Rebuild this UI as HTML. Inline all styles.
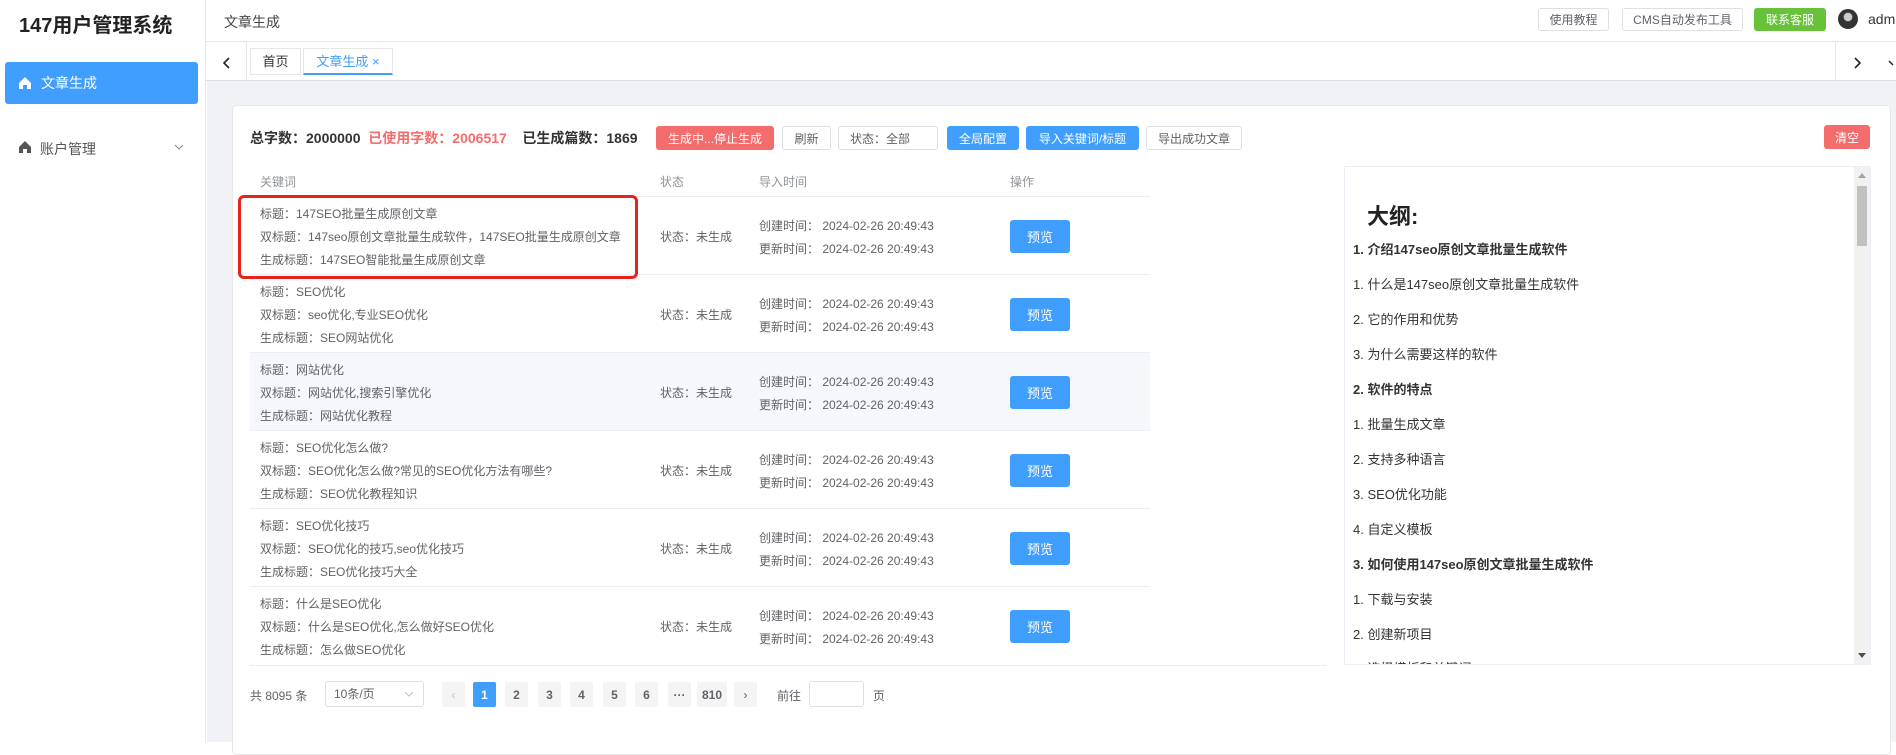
<!DOCTYPE html>
<html><head><meta charset="utf-8"><style>
*{margin:0;padding:0;box-sizing:border-box}
body{width:1896px;height:742px;overflow:hidden;background:#fff;font-family:"Liberation Sans","Noto Sans CJK SC",sans-serif;color:#606266;position:relative}
.a{position:absolute;white-space:nowrap}
.btn{position:absolute;border:1px solid #dcdfe6;border-radius:3px;font-size:12px;display:flex;align-items:center;justify-content:center;background:#fff;color:#606266}
.row{position:absolute;left:250px;width:900px;height:78px;border-bottom:1px solid #ebeef5;font-size:12px}
.row .t{position:absolute;left:10px}
.pv{position:absolute;left:760px;top:23px;width:60px;height:33px;background:#409eff;color:#fff;border-radius:3px;font-size:13px;display:flex;align-items:center;justify-content:center}
.ol{position:absolute;left:8px;font-size:13px;color:#333}
.pg{position:absolute;top:682px;width:23px;height:25px;background:#f4f4f5;border-radius:2px;font-size:12px;color:#606266;display:flex;align-items:center;justify-content:center;font-weight:bold}
</style></head><body>
<!-- sidebar -->
<div class="a" style="left:0;top:0;width:206px;height:742px;border-right:1px solid #e6e6e6"></div>
<div class="a" style="left:19px;top:9px;font-size:20px;font-weight:bold;color:#222">147用户管理系统</div>
<div class="a" style="left:5px;top:62px;width:193px;height:42px;background:#409eff;border-radius:3px;color:#fff;font-size:14px;line-height:42px;padding-left:36px">文章生成</div>
<svg class="a" style="left:18px;top:76px" width="14" height="14" viewBox="0 0 14 14"><path d="M7 1L1 7V13H5V9H9V13H13V7Z" fill="#fff"/></svg>
<svg class="a" style="left:18px;top:140px" width="14" height="14" viewBox="0 0 14 14"><path d="M7 1L1 7V13H5V9H9V13H13V7Z" fill="#555"/></svg>
<div class="a" style="left:40px;top:139px;font-size:14px;color:#555">账户管理</div>
<svg class="a" style="left:174px;top:144px" width="10" height="6"><path d="M1 1L5 5L9 1" stroke="#888" fill="none"/></svg>
<!-- header -->
<div class="a" style="left:206px;top:41px;width:1690px;height:1px;background:#e6e6e6"></div>
<div class="a" style="left:224px;top:12px;font-size:14px;color:#444">文章生成</div>
<div class="btn" style="left:1538px;top:8px;width:71px;height:23px">使用教程</div>
<div class="btn" style="left:1622px;top:8px;width:121px;height:23px">CMS自动发布工具</div>
<div class="btn" style="left:1754px;top:8px;width:72px;height:23px;background:#67c23a;border-color:#67c23a;color:#fff">联系客服</div>
<div class="a" style="left:1838px;top:9px;width:20px;height:20px;border-radius:50%;background:radial-gradient(circle at 50% 40%,#ccc 0 25%,#333 30%)"></div>
<div class="a" style="left:1868px;top:11px;font-size:14px;color:#333">adm</div>
<!-- tabs -->
<div class="a" style="left:206px;top:80px;width:1690px;height:1px;background:#dcdfe6"></div>
<svg class="a" style="left:223px;top:57px" width="8" height="12"><path d="M6 1L1 6L6 11" stroke="#222" stroke-width="1.6" fill="none"/></svg>
<div class="a" style="left:246px;top:42px;width:1px;height:38px;background:#e6e6e6"></div>
<div class="a" style="left:250px;top:48px;width:51px;height:27px;border:1px solid #e6e6e6;font-size:13px;color:#333;text-align:center;line-height:25px">首页</div>
<div class="a" style="left:303px;top:48px;width:90px;height:27px;border:1px solid #e6e6e6;border-bottom:2px solid #409eff;font-size:13px;color:#409eff;text-align:center;line-height:25px">文章生成 ×</div>
<div class="a" style="left:1835px;top:42px;width:1px;height:38px;background:#e6e6e6"></div>
<svg class="a" style="left:1853px;top:57px" width="8" height="12"><path d="M2 1L7 6L2 11" stroke="#222" stroke-width="1.6" fill="none"/></svg>
<svg class="a" style="left:1888px;top:60px" width="8" height="6"><path d="M1 1L5 5" stroke="#222" stroke-width="1.4" fill="none"/></svg>
<!-- content -->
<div class="a" style="left:207px;top:81px;width:1689px;height:661px;background:#f0f2f5"></div>
<div class="a" style="left:232px;top:105px;width:1659px;height:650px;background:#fff;border:1px solid #e8e8e8;border-radius:4px"></div>
<div class="a" style="left:250px;top:128px;font-size:14px;font-weight:bold;color:#333">总字数：2000000 <span style="color:#f56c6c">&nbsp;已使用字数：2006517</span> &nbsp;&nbsp;&nbsp;已生成篇数：1869</div>
<div class="btn" style="left:656px;top:126px;width:118px;height:24px;background:#f56c6c;border-color:#f56c6c;color:#fff">生成中...停止生成</div>
<div class="btn" style="left:782px;top:126px;width:49px;height:24px">刷新</div>
<div class="btn" style="left:838px;top:126px;width:100px;height:24px;justify-content:flex-start;padding-left:11px">状态：全部</div>
<div class="btn" style="left:947px;top:126px;width:72px;height:24px;background:#409eff;border-color:#409eff;color:#fff">全局配置</div>
<div class="btn" style="left:1026px;top:126px;width:113px;height:24px;background:#409eff;border-color:#409eff;color:#fff">导入关键词/标题</div>
<div class="btn" style="left:1146px;top:126px;width:96px;height:24px">导出成功文章</div>
<div class="btn" style="left:1824px;top:125px;width:46px;height:24px;background:#f56c6c;border-color:#f56c6c;color:#fff">清空</div>
<!-- table header -->
<div class="a" style="left:250px;top:196px;width:900px;height:1px;background:#ebeef5"></div>
<div class="a" style="left:260px;top:173px;font-size:12px;color:#909399">关键词</div>
<div class="a" style="left:660px;top:173px;font-size:12px;color:#909399">状态</div>
<div class="a" style="left:759px;top:173px;font-size:12px;color:#909399">导入时间</div>
<div class="a" style="left:1010px;top:173px;font-size:12px;color:#909399">操作</div>

<div class="row" style="top:197px"><div class="t" style="top:8px">标题：147SEO批量生成原创文章</div><div class="t" style="top:31px">双标题：147seo原创文章批量生成软件，147SEO批量生成原创文章</div><div class="t" style="top:54px">生成标题：147SEO智能批量生成原创文章</div><div class="a" style="left:410px;top:31px">状态：未生成</div><div class="a" style="left:509px;top:20px">创建时间：&nbsp;2024-02-26 20:49:43</div><div class="a" style="left:509px;top:43px">更新时间：&nbsp;2024-02-26 20:49:43</div><div class="pv">预览</div></div>
<div class="row" style="top:275px"><div class="t" style="top:8px">标题：SEO优化</div><div class="t" style="top:31px">双标题：seo优化,专业SEO优化</div><div class="t" style="top:54px">生成标题：SEO网站优化</div><div class="a" style="left:410px;top:31px">状态：未生成</div><div class="a" style="left:509px;top:20px">创建时间：&nbsp;2024-02-26 20:49:43</div><div class="a" style="left:509px;top:43px">更新时间：&nbsp;2024-02-26 20:49:43</div><div class="pv">预览</div></div>
<div class="row" style="top:353px;background:#f5f7fa"><div class="t" style="top:8px">标题：网站优化</div><div class="t" style="top:31px">双标题：网站优化,搜索引擎优化</div><div class="t" style="top:54px">生成标题：网站优化教程</div><div class="a" style="left:410px;top:31px">状态：未生成</div><div class="a" style="left:509px;top:20px">创建时间：&nbsp;2024-02-26 20:49:43</div><div class="a" style="left:509px;top:43px">更新时间：&nbsp;2024-02-26 20:49:43</div><div class="pv">预览</div></div>
<div class="row" style="top:431px"><div class="t" style="top:8px">标题：SEO优化怎么做?</div><div class="t" style="top:31px">双标题：SEO优化怎么做?常见的SEO优化方法有哪些?</div><div class="t" style="top:54px">生成标题：SEO优化教程知识</div><div class="a" style="left:410px;top:31px">状态：未生成</div><div class="a" style="left:509px;top:20px">创建时间：&nbsp;2024-02-26 20:49:43</div><div class="a" style="left:509px;top:43px">更新时间：&nbsp;2024-02-26 20:49:43</div><div class="pv">预览</div></div>
<div class="row" style="top:509px"><div class="t" style="top:8px">标题：SEO优化技巧</div><div class="t" style="top:31px">双标题：SEO优化的技巧,seo优化技巧</div><div class="t" style="top:54px">生成标题：SEO优化技巧大全</div><div class="a" style="left:410px;top:31px">状态：未生成</div><div class="a" style="left:509px;top:20px">创建时间：&nbsp;2024-02-26 20:49:43</div><div class="a" style="left:509px;top:43px">更新时间：&nbsp;2024-02-26 20:49:43</div><div class="pv">预览</div></div>
<div class="row" style="top:587px;border-bottom:none"><div class="t" style="top:8px">标题：什么是SEO优化</div><div class="t" style="top:31px">双标题：什么是SEO优化,怎么做好SEO优化</div><div class="t" style="top:54px">生成标题：怎么做SEO优化</div><div class="a" style="left:410px;top:31px">状态：未生成</div><div class="a" style="left:509px;top:20px">创建时间：&nbsp;2024-02-26 20:49:43</div><div class="a" style="left:509px;top:43px">更新时间：&nbsp;2024-02-26 20:49:43</div><div class="pv">预览</div></div>
<div class="a" style="left:250px;top:665px;width:1076px;height:1px;background:#ebeef5"></div>
<div class="a" style="left:238px;top:195px;width:400px;height:84px;border:3px solid #e8231c;border-radius:6px"></div>

<!-- pagination -->
<div class="a" style="left:250px;top:687px;font-size:12px;color:#606266">共 8095 条</div>
<div class="a" style="left:325px;top:681px;width:99px;height:26px;border:1px solid #dcdfe6;border-radius:3px;font-size:12px;padding-left:8px;line-height:24px">10条/页</div>
<svg class="a" style="left:404px;top:691px" width="10" height="6"><path d="M1 1L5 5L9 1" stroke="#c0c4cc" fill="none"/></svg>
<div class="pg" style="left:442px;color:#c0c4cc;font-weight:normal">‹</div>
<div class="pg" style="left:473px;background:#409eff;color:#fff">1</div>
<div class="pg" style="left:505px">2</div>
<div class="pg" style="left:538px">3</div>
<div class="pg" style="left:570px">4</div>
<div class="pg" style="left:603px">5</div>
<div class="pg" style="left:635px">6</div>
<div class="pg" style="left:668px">···</div>
<div class="pg" style="left:697px;width:30px">810</div>
<div class="pg" style="left:734px;font-weight:normal">›</div>
<div class="a" style="left:777px;top:687px;font-size:12px">前往</div>
<div class="a" style="left:809px;top:681px;width:55px;height:26px;border:1px solid #dcdfe6;border-radius:3px"></div>
<div class="a" style="left:873px;top:687px;font-size:12px">页</div>

<!-- outline panel -->
<div class="a" style="left:1344px;top:166px;width:527px;height:499px;border:1px solid #ebeef5;overflow:hidden">
<div class="a" style="left:22px;top:32px;font-size:22px;font-weight:bold;color:#222">大纲:</div>
<div class="ol" style="top:72px;font-weight:bold">1. 介绍147seo原创文章批量生成软件</div>
<div class="ol" style="top:107px">1. 什么是147seo原创文章批量生成软件</div>
<div class="ol" style="top:142px">2. 它的作用和优势</div>
<div class="ol" style="top:177px">3. 为什么需要这样的软件</div>
<div class="ol" style="top:212px;font-weight:bold">2. 软件的特点</div>
<div class="ol" style="top:247px">1. 批量生成文章</div>
<div class="ol" style="top:282px">2. 支持多种语言</div>
<div class="ol" style="top:317px">3. SEO优化功能</div>
<div class="ol" style="top:352px">4. 自定义模板</div>
<div class="ol" style="top:387px;font-weight:bold">3. 如何使用147seo原创文章批量生成软件</div>
<div class="ol" style="top:422px">1. 下载与安装</div>
<div class="ol" style="top:457px">2. 创建新项目</div>
<div class="ol" style="top:491px">3. 选择模板和关键词</div>
<div class="a" style="right:0;top:0;width:16px;height:499px;background:#f1f1f1"></div>
<div class="a" style="right:3px;top:19px;width:10px;height:60px;background:#c1c1c1"></div>
<svg class="a" style="right:4px;top:6px" width="8" height="5"><path d="M0 5L4 0L8 5Z" fill="#a3a3a3"/></svg>
<svg class="a" style="right:4px;top:486px" width="8" height="5"><path d="M0 0L4 5L8 0Z" fill="#505050"/></svg>
</div>
</body></html>
